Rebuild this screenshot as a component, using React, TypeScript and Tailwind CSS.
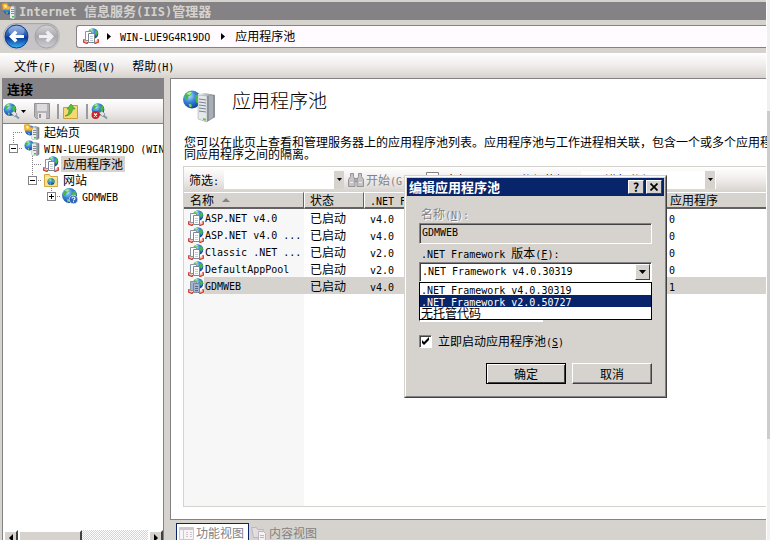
import { ReactNode } from "react";
import clsx from "clsx";

type Pool = {
  name: string;
  state: string;
  version: string;
  apps: number;
  selected?: boolean;
};

const pools: Pool[] = [
  { name: "ASP.NET v4.0", state: "已启动", version: "v4.0", apps: 0 },
  { name: "ASP.NET v4.0 ...", state: "已启动", version: "v4.0", apps: 0 },
  { name: "Classic .NET ...", state: "已启动", version: "v2.0", apps: 0 },
  { name: "DefaultAppPool", state: "已启动", version: "v2.0", apps: 0 },
  { name: "GDMWEB", state: "已启动", version: "v4.0", apps: 1, selected: true },
];

const frameworks = [".NET Framework v4.0.30319", ".NET Framework v2.0.50727", "无托管代码"];

export default function App() {
  return (
    <div className="relative flex h-screen cursor-default overflow-hidden bg-white font-['Noto_Sans_CJK_SC',sans-serif] text-[12px] leading-[16px] text-black">
      <IconDefs />
      <div className="flex min-w-0 flex-1 flex-col border-t-2 border-[#d6d3ce] bg-[#d6d3ce]">
        <TitleBar />
        <AddressBar />
        <nav className="flex h-[25px] shrink-0 items-center gap-[17px] bg-linear-to-b from-white via-[#f0ecec] to-[#d6d3ce] pl-[14px]">
          {["文件(F)", "视图(V)", "帮助(H)"].map((label) => (
            <button key={label} type="button">
              <Mixed text={label} />
            </button>
          ))}
        </nav>
        <div className="flex min-h-0 flex-1">
          <Connections />
          <PoolsView />
        </div>
      </div>
      <div className="ml-px w-[3px] shrink-0 bg-[#f0f0f0] pt-[111px]">
        <div className="h-[328px] bg-[#cdcdcd]" />
      </div>
      <EditDialog />
    </div>
  );
}

// Latin runs are set in a fixed-width face, half as wide as the Chinese characters.
function Mixed({ text, latin = "text-[10px]" }: { text: string; latin?: string }) {
  return (
    <span className="whitespace-pre">
      {text.split(/([\x20-\x7e]+)/).map((run, i) =>
        i % 2 ? (
          <span key={i} className={clsx("font-['DejaVu_Sans_Mono',monospace] leading-none", latin)}>
            {run}
          </span>
        ) : (
          run
        ),
      )}
    </span>
  );
}

// A label ending in an underlined access key, e.g. 名称(N):
function KeyLabel({ text, accessKey, tail = "" }: { text: string; accessKey: string; tail?: string }) {
  return (
    <span className="whitespace-pre">
      <Mixed text={text + "("} />
      <span className="font-['DejaVu_Sans_Mono',monospace] text-[10px] leading-none underline">{accessKey}</span>
      <Mixed text={")" + tail} />
    </span>
  );
}

function TitleBar() {
  return (
    <header className="flex h-[18px] shrink-0 items-center bg-[#848284] pl-[2px] text-[13px] font-bold text-[#d6d3ce]">
      <StartIcon />
      <h1 className="ml-px">
        <Mixed text="Internet 信息服务(IIS)管理器" latin="text-[12px]" />
      </h1>
    </header>
  );
}

function AddressBar() {
  return (
    <div className="flex h-[33px] shrink-0 items-center">
      <NavButtons />
      <div className="mb-px flex h-[23px] flex-1 items-center rounded-l-[3px] border-y border-l border-[#848284] bg-[#fffbff] pl-[6px]">
        <PoolIcon />
        <Chevron className="ml-[8px]" />
        <span className="ml-[9px]">
          <Mixed text="WIN-LUE9G4R19DO" />
        </span>
        <Chevron className="ml-[11px]" />
        <span className="ml-[10px]">应用程序池</span>
      </div>
    </div>
  );
}

function Connections() {
  return (
    <aside className="flex w-[162px] shrink-0 flex-col border-x border-[#848284] bg-white ml-[2px]">
      <h2 className="h-[21px] shrink-0 bg-[#848284] pl-[4px] text-[13px] leading-[21px] font-bold">连接</h2>
      <div className="flex h-[25px] shrink-0 items-center border-b border-[#848284] bg-linear-to-b from-white via-[#f0ecec] to-[#d6d3ce]">
        <button type="button" title="连接" className="flex items-center">
          <ConnectIcon />
          <DownArrow className="ml-px" />
        </button>
        <button type="button" title="保存" className="ml-[8px]">
          <SaveIcon />
        </button>
        <span className="ml-[7px] h-[15px] w-[2px] bg-[#9c9a9c]" />
        <button type="button" title="向上" className="ml-[4px]">
          <UpIcon />
        </button>
        <span className="ml-[8px] h-[15px] w-[2px] bg-[#9c9a9c]" />
        <button type="button" title="断开" className="ml-[3px]">
          <ConnectIcon broken />
        </button>
      </div>
      <ul className="min-h-0 flex-1 overflow-hidden pl-px">
        <TreeRow cells={["start"]} icon={<StartIcon />} label="起始页" />
        <TreeRow cells={["minus"]} icon={<ServerIcon />} label="WIN-LUE9G4R19DO (WIN-LUE9G4R19DO\Administrator)" />
        <TreeRow cells={["blank", "tee"]} icon={<PoolIcon />} label="应用程序池" selected />
        <TreeRow cells={["blank", "minus"]} icon={<FolderIcon />} label="网站" />
        <TreeRow cells={["blank", "blank", "plus"]} icon={<SiteIcon />} label="GDMWEB" />
      </ul>
      <div className="flex h-[10px] shrink-0 overflow-hidden bg-[repeating-conic-gradient(#fff_0_25%,#d6d3ce_0_50%)] bg-[length:2px_2px]">
        <button type="button" aria-label="向左滚动" className="flex h-[16px] w-[15px] items-center justify-center border-2 border-white border-r-[#424142] bg-[#d6d3ce]">
          <svg width="4" height="8" viewBox="0 0 4 8">
            <path d="M4 0v8L0 4z" />
          </svg>
        </button>
        <div className="h-[16px] w-[64px] border-2 border-white border-r-[#424142] bg-[#d6d3ce]" />
        <button type="button" aria-label="向右滚动" className="ml-auto flex h-[16px] w-[15px] items-center justify-center border-2 border-white border-r-[#424142] bg-[#d6d3ce]">
          <svg width="4" height="8" viewBox="0 0 4 8">
            <path d="M0 0v8l4-4z" />
          </svg>
        </button>
      </div>
    </aside>
  );
}

type Cell = "blank" | "start" | "tee" | "minus" | "plus";

type TreeRowProps = {
  cells: Cell[];
  icon: ReactNode;
  label: string;
  selected?: boolean;
};

function TreeRow({ cells, icon, label, selected }: TreeRowProps) {
  return (
    <li className="flex h-[16px] items-center">
      {cells.map((cell, i) => (
        <TreeCell key={i} kind={cell} />
      ))}
      <span className="ml-px shrink-0">{icon}</span>
      <span className={clsx("ml-[2px] px-[2px]", selected && "bg-[#d6d3ce]")}>
        <Mixed text={label} />
      </span>
    </li>
  );
}

function TreeCell({ kind }: { kind: Cell }) {
  const box = kind === "minus" || kind === "plus";
  return (
    <svg width="19" height="16" viewBox="0 0 19 16" className="shrink-0" shapeRendering="crispEdges">
      {kind !== "blank" && (
        <g stroke="#848284" strokeDasharray="1 1" fill="none">
          <path d="M9 8.5h10" />
          {kind === "start" && <path d="M9.5 8v8" />}
          {kind === "tee" && <path d="M9.5 0v16" />}
          {box && <path d="M9.5 0v4" />}
        </g>
      )}
      {box && <path d="M5.5 4.5h8v8h-8z" fill="#fff" stroke="#848284" />}
      {box && <path d="M7 8.5h5" stroke="#000" />}
      {kind === "plus" && <path d="M9.5 6v5" stroke="#000" />}
    </svg>
  );
}

function PoolsView() {
  return (
    <main className="ml-[6px] flex min-w-0 flex-1 flex-col">
      <section className="flex min-h-0 flex-1 flex-col border-y border-l border-[#848284] bg-white pb-[12px] pl-[12px]">
        <div className="flex h-[57px] shrink-0 gap-[17px] pt-[11px]">
          <BigServerIcon />
          <h2 className="text-[19px] leading-[20px] font-light">应用程序池</h2>
        </div>
        <p className="shrink-0 pl-px leading-[12px] whitespace-nowrap">
          您可以在此页上查看和管理服务器上的应用程序池列表。应用程序池与工作进程相关联，包含一个或多个应用程序，并提供不
          <br />
          同应用程序之间的隔离。
        </p>
        <div className="mt-[6px] flex min-h-0 flex-1 flex-col border-t border-b border-l border-[#d6d3ce]">
          <FilterBar />
          <div className="min-h-0 flex-1 bg-linear-to-r from-[#f7f7f7] from-[120px] to-white to-[120px]">
            <PoolTable />
          </div>
        </div>
      </section>
      <div className="flex h-[20px] shrink-0 items-start overflow-hidden pt-[3px] pl-[6px] text-[#848284]">
        <button type="button" className="flex h-[20px] items-center border border-[#08246b] bg-white pr-[4px] pl-[2px]">
          <FeatureIcon />
          <span className="ml-[2px]">功能视图</span>
        </button>
        <button type="button" className="flex h-[20px] items-center pl-[2px]">
          <ContentIcon />
          <span className="ml-[2px]">内容视图</span>
        </button>
      </div>
    </main>
  );
}

function FilterBar() {
  return (
    <div className="flex h-[25px] shrink-0 items-center bg-linear-to-b from-white via-[#f0ecec] to-[#d6d3ce] pl-[5px]">
      <label htmlFor="filter" className="w-[35px]">
        <Mixed text="筛选:" />
      </label>
      <input id="filter" className="h-[19px] w-[110px] bg-white px-1 outline-none" />
      <button type="button" aria-label="筛选历史" className="flex h-[18px] w-[10px] items-center justify-center bg-[#d6d3ce]">
        <DownArrow />
      </button>
      <button type="button" className="ml-[4px] flex w-[76px] items-center text-[#848284]">
        <BinocularsIcon />
        <span className="ml-[2px]">
          <Mixed text="开始(G)" />
        </span>
      </button>
      <button type="button" className="ml-[2px] flex w-[90px] items-center">
        <svg width="13" height="16" viewBox="0 0 13 16">
          <path d="M.5.5h12v15H.5z" fill="#fff" stroke="#848284" />
        </svg>
        <span className="ml-[6px]">
          <Mixed text="全部显示(A)" />
        </span>
      </button>
      <label htmlFor="grouping" className="ml-[4px] w-[61px]">
        <Mixed text="分组依据:" />
      </label>
      <div className="flex h-[18px]">
        <select id="grouping" className="w-[124px] appearance-none bg-white pl-[12px] outline-none">
          <option>不进行分组</option>
        </select>
        <span className="flex w-[11px] items-center justify-center border-r border-white bg-[#d6d3ce]">
          <DownArrow />
        </span>
      </div>
    </div>
  );
}

function PoolTable() {
  const th = "h-[17px] border-t border-b-2 border-t-white border-b-[#636163] p-0 text-left font-normal";
  return (
    <table className="w-full table-fixed border-separate border-spacing-0 whitespace-nowrap">
      <thead>
        <tr className="bg-[#d6d3ce] leading-[14px]">
          <th className={clsx(th, "w-[120px] border-r border-r-[#636163] pl-[6px]")}>
            <span className="flex items-center gap-[8px]">
              名称
              <svg width="8" height="4" viewBox="0 0 8 4" fill="#848284">
                <path d="M4 0l4 4H0z" />
              </svg>
            </span>
          </th>
          <th className={clsx(th, "w-[60px] border-r border-l border-r-[#636163] border-l-white pl-[5px]")}>状态</th>
          <th className={clsx(th, "w-[303px] border-l border-l-white pl-[5px]")}>
            <Mixed text=".NET Framework 版本" />
          </th>
          <th className={clsx(th, "pl-[3px]")}>应用程序</th>
        </tr>
      </thead>
      <tbody>
        {pools.map((pool, i) => (
          <tr key={i} className="h-[17px]">
            <td className="p-0">
              <div className="flex h-[17px] items-center pl-[4px]">
                <PoolIcon dim={pool.selected} />
                <span className={clsx("h-[17px] flex-1 pl-px", pool.selected && "bg-[#d6d3ce]")}>
                  <Mixed text={pool.name} />
                </span>
              </div>
            </td>
            <td className={clsx("p-0 pl-[6px]", pool.selected && "bg-[#d6d3ce]")}>{pool.state}</td>
            <td className={clsx("p-0 pl-[6px]", pool.selected && "bg-[#d6d3ce]")}>
              <Mixed text={pool.version} />
            </td>
            <td className={clsx("p-0 pl-[2px]", pool.selected && "bg-[#d6d3ce]")}>
              <Mixed text={String(pool.apps)} />
            </td>
          </tr>
        ))}
      </tbody>
    </table>
  );
}

function EditDialog() {
  const caption =
    "flex h-[14px] w-[16px] items-center justify-center border border-white border-r-[#424142] border-b-[#424142] bg-[#d6d3ce] text-black";
  const sunken = "border border-[#848284] border-r-white border-b-white";
  return (
    <div
      role="dialog"
      aria-labelledby="dialog-title"
      className="absolute top-[175px] left-[404px] flex h-[223px] w-[263px] flex-col border border-[#d6d3ce] border-r-[#424142] border-b-[#424142] bg-[#d6d3ce]"
    >
      <div className="flex flex-1 flex-col border border-white border-r-[#848284] border-b-[#848284] p-px">
        <div className="flex h-[18px] items-center bg-[#08246b] px-[2px] text-white">
          <h2 id="dialog-title" className="flex-1 text-[13px] font-bold">
            编辑应用程序池
          </h2>
          <button type="button" aria-label="帮助" className={clsx(caption, "text-[12px] font-bold")}>
            ?
          </button>
          <button type="button" aria-label="关闭" className={clsx(caption, "ml-[2px]")}>
            <svg width="8" height="8" viewBox="0 0 8 8" stroke="#000" strokeWidth="1.7">
              <path d="M.5.5l7 7M7.5.5l-7 7" />
            </svg>
          </button>
        </div>
        <form className="flex flex-1 flex-col px-[12px] pt-[10px]">
          <label htmlFor="pool-name" className="pl-[2px] text-[#848284] [text-shadow:1px_1px_#fff]">
            <KeyLabel text="名称" accessKey="N" tail=":" />
          </label>
          <input
            id="pool-name"
            disabled
            defaultValue="GDMWEB"
            className={clsx(
              "mt-px h-[21px] w-full px-[2px] pb-[2px] font-['DejaVu_Sans_Mono',monospace] text-[10px] shadow-[inset_1px_1px_#424142]",
              sunken,
            )}
          />
          <label htmlFor="framework" className="mt-px pl-[2px]">
            <KeyLabel text=".NET Framework 版本" accessKey="F" tail=":" />
          </label>
          <div className="relative mt-px">
            <div className={clsx("flex h-[20px] bg-white shadow-[inset_1px_1px_#424142]", sunken)}>
              <select
                id="framework"
                className="min-w-0 flex-1 appearance-none bg-transparent px-[2px] font-['DejaVu_Sans_Mono',monospace] text-[10px] outline-none"
              >
                {frameworks.map((framework) => (
                  <option key={framework}>{framework}</option>
                ))}
              </select>
              <span className="m-px flex w-[15px] items-center justify-center border border-white border-r-[#424142] border-b-[#424142] bg-[#d6d3ce]">
                <svg width="7" height="4" viewBox="0 0 7 4">
                  <path d="M0 0h7L3.5 4z" />
                </svg>
              </span>
            </div>
            <ul role="listbox" aria-label="版本" className="absolute top-[20px] left-0 h-[38px] w-full border border-black bg-white leading-[12px]">
              {frameworks.map((framework, i) => (
                <li
                  key={framework}
                  role="option"
                  aria-selected={i === 1}
                  className={clsx("h-[12px] pl-px", i === 1 && "bg-[#08246b] text-white")}
                >
                  <Mixed text={framework} />
                </li>
              ))}
            </ul>
          </div>
          <select aria-label="托管管道模式" className={clsx("mt-[20px] h-[20px] w-[124px] appearance-none bg-white", sunken)}>
            <option>集成</option>
          </select>
          <label className="mt-[11px] flex items-center gap-[6px]">
            <span className="relative size-[13px]">
              <input
                type="checkbox"
                defaultChecked
                className={clsx("peer block size-[13px] appearance-none bg-white shadow-[inset_1px_1px_#424142]", sunken)}
              />
              <svg width="13" height="13" viewBox="0 0 13 13" className="pointer-events-none absolute inset-0 hidden peer-checked:block">
                <path d="M3 5v3l2 2 5-5V2L5 7z" />
              </svg>
            </span>
            <KeyLabel text="立即启动应用程序池" accessKey="S" />
          </label>
          <div className="mt-[14px] flex justify-end gap-[6px]">
            <button type="button" className="h-[21px] w-[80px] border border-black shadow-[inset_1px_1px_#fff,inset_-1px_-1px_#424142]">
              确定
            </button>
            <button type="button" className="h-[21px] w-[80px] border border-white border-r-[#424142] border-b-[#424142] shadow-[inset_-1px_-1px_#848284]">
              取消
            </button>
          </div>
        </form>
      </div>
    </div>
  );
}

function IconDefs() {
  return (
    <svg className="absolute size-0" aria-hidden="true">
      <defs>
        <radialGradient id="globe" cx=".35" cy=".3" r=".75">
          <stop offset="0" stopColor="#b5e3ff" />
          <stop offset=".45" stopColor="#3a86d8" />
          <stop offset="1" stopColor="#0c3c9c" />
        </radialGradient>
        <linearGradient id="metal" x1="0" x2="1" y1="0" y2="0">
          <stop offset="0" stopColor="#f4f6f8" />
          <stop offset=".5" stopColor="#b9bec4" />
          <stop offset="1" stopColor="#747b83" />
        </linearGradient>
        <linearGradient id="back" x1="0" x2="0" y1="0" y2="1">
          <stop offset="0" stopColor="#7fa4dc" />
          <stop offset=".45" stopColor="#1f55b4" />
          <stop offset=".55" stopColor="#0a3796" />
          <stop offset="1" stopColor="#39b4f5" />
        </linearGradient>
        <linearGradient id="forward" x1="0" x2="0" y1="0" y2="1">
          <stop offset="0" stopColor="#d4d3d6" />
          <stop offset=".5" stopColor="#a9a8ac" />
          <stop offset="1" stopColor="#cfced2" />
        </linearGradient>
      </defs>
    </svg>
  );
}

function Globe({ x, y, r }: { x: number; y: number; r: number }) {
  return (
    <g transform={`translate(${x} ${y}) scale(${r / 8})`}>
      <circle r="8" fill="url(#globe)" />
      <path d="M-6.500-3C-6-6-2-8 0-7l-1 3-2 1-1 3-2 0zM3-4l3-1 1.500 4L6 3 4 3 3 0z" fill="#46b84a" />
      <path d="M-3 4l2 0 1 2-2 1z" fill="#7fd06a" />
      <path d="M-5-5c2-2 3-2 5-1.500L-2-4z" fill="#b4ef9c" />
    </g>
  );
}

function NavButtons() {
  return (
    <div className="ml-[3px] flex w-[73px] items-center">
      <div className="flex gap-[5px] rounded-full bg-[#c6c4c6] p-px shadow-[inset_0_1px_1px_#a5a3a5]">
        <button type="button" aria-label="后退">
          <svg width="25" height="25" viewBox="0 0 25 25">
            <circle cx="12.5" cy="12.5" r="11.5" fill="url(#back)" stroke="#123f8c" />
            <ellipse cx="12.5" cy="7" rx="8" ry="5" fill="#fff" opacity=".25" />
            <path d="M5 12.5l6-6 2.500 2.300-2 2.200H20v3h-8.500l2 2.200L11 18.500z" fill="#fff" />
          </svg>
        </button>
        <button type="button" aria-label="前进" disabled>
          <svg width="25" height="25" viewBox="0 0 25 25">
            <circle cx="12.5" cy="12.5" r="11.5" fill="url(#forward)" stroke="#a5a3a8" />
            <path d="M20 12.500l-6-6-2.500 2.300 2 2.200H5v3h8.500l-2 2.200 2.500 2.300z" fill="#efeef2" />
          </svg>
        </button>
      </div>
    </div>
  );
}

function Chevron({ className }: { className?: string }) {
  return (
    <svg width="4" height="7" viewBox="0 0 4 7" className={className}>
      <path d="M0 0l4 3.500L0 7z" />
    </svg>
  );
}

function DownArrow({ className }: { className?: string }) {
  return (
    <svg width="5" height="3" viewBox="0 0 5 3" className={className}>
      <path d="M0 0h5L2.500 3z" />
    </svg>
  );
}

function Tower() {
  return (
    <g>
      <path d="M8 3.500l3-1 4 1v11l-3 1.500-4-1z" fill="url(#metal)" stroke="#7b838b" strokeWidth=".6" />
      <path d="M8 4l4 .5V16l-4-1z" fill="#e9ecef" />
      <path d="M9 6.500h3M9 8.500h3M9 10.500h3" stroke="#6d747c" strokeWidth=".8" />
      <path d="M10 13h2v1.500h-2z" fill="#39c639" />
    </g>
  );
}

function StartIcon() {
  return (
    <svg width="16" height="16" viewBox="0 0 16 16">
      <Globe x={6} y={6.5} r={5} />
      <Tower />
      <path d="M0 1l5-1 1 3 3 1-2 3-3-1-3 1z" fill="#f7b731" stroke="#d88a10" strokeWidth=".5" />
      <path d="M2 2l2 0 1 2-2 1z" fill="#fff3b0" />
    </svg>
  );
}

function ServerIcon() {
  return (
    <svg width="16" height="16" viewBox="0 0 16 16">
      <Globe x={5.5} y={5.5} r={5} />
      <Tower />
    </svg>
  );
}

function BigServerIcon() {
  return (
    <svg width="32" height="33" viewBox="0 0 32 33" className="shrink-0">
      <Globe x={9} y={9.5} r={9} />
      <path d="M15 4l7-1 10 2v22l-9 5-8-3z" fill="url(#metal)" />
      <path d="M15 5l9 1v26l-9-3z" fill="#e4e8eb" stroke="#9ca3aa" strokeWidth=".5" />
      <path d="M24 6l8-1v22l-8 5z" fill="#8b9299" />
      <path d="M26 6l4-.5v22L26 30z" fill="#a9afb5" />
      <path d="M16 9l7 1M16 12l7 1M16 15l7 1M16 18l7 1M16 21l7 1" stroke="#7b838b" />
      <path d="M20 28l3 .7v2l-3-.8z" fill="#5ad51e" />
    </svg>
  );
}

function PoolIcon({ dim }: { dim?: boolean }) {
  return (
    <svg width="16" height="16" viewBox="0 0 16 16" className="shrink-0">
      <Globe x={10} y={5.5} r={5.3} />
      <path d="M1 11l-.5 3L4 15.500l1-1.500M15 11l.5 3-3.500 1.500-1-1.500" fill="#f2c4bc" stroke="#d03a28" strokeWidth="1.300" />
      <path d="M2.500 3.500h6v9h-6z" fill={dim ? "#a5b1cd" : "#fff"} stroke="#8a93a0" />
      <path d="M5.500 5.500h6v9h-6z" fill={dim ? "#a5b1cd" : "#fff"} stroke="#7d8794" />
      <path d="M7 8.500h3M7 10.500h3M7 12.500h3" stroke={dim ? "#5a6a92" : "#c3c9d0"} />
    </svg>
  );
}

function FolderIcon() {
  return (
    <svg width="16" height="16" viewBox="0 0 16 16">
      <path d="M1.500 2.500h5l1 2h7v10h-13z" fill="#f9e08a" stroke="#d3a73c" />
      <path d="M2 6h12" stroke="#fff4c0" />
      <Globe x={8} y={9.5} r={3.6} />
    </svg>
  );
}

function SiteIcon() {
  return (
    <svg width="16" height="16" viewBox="0 0 16 16">
      <Globe x={7.5} y={7.5} r={7.5} />
      <circle cx="11.5" cy="11.5" r="4.3" fill="#3164b8" stroke="#dbe6f7" strokeWidth=".8" />
      <path d="M10 10.500c0-2 3-2 3 0 0 1-1.500 1-1.500 2M11.500 13.200v1" fill="none" stroke="#fff" strokeWidth="1.1" />
    </svg>
  );
}

function ConnectIcon({ broken }: { broken?: boolean }) {
  return (
    <svg width="17" height="17" viewBox="0 0 17 17">
      <Globe x={7} y={6.5} r={6.3} />
      <path d="M8 10l3-2 3 3-2 3z" fill="#dfe3e6" stroke="#7b838b" strokeWidth=".7" />
      <path d="M12.500 12.500l3.500 3" stroke="#7b9aa8" strokeWidth="2" />
      {broken && (
        <g>
          <circle cx="4.5" cy="12" r="4" fill="#cf2323" />
          <path d="M3 10.500l3 3M6 10.500l-3 3" stroke="#fff" strokeWidth="1.2" />
        </g>
      )}
    </svg>
  );
}

function SaveIcon() {
  return (
    <svg width="16" height="16" viewBox="0 0 16 16">
      <path d="M.5.5h15v15h-13l-2-2z" fill="#b5b2b5" stroke="#949294" />
      <path d="M3 1h10v7H3z" fill="#dedbde" />
      <path d="M4 10h8v6H4z" fill="#e7e5e7" />
      <path d="M5 11h2v4H5z" fill="#949294" />
    </svg>
  );
}

function UpIcon() {
  return (
    <svg width="15" height="16" viewBox="0 0 15 16">
      <path d="M.5 4.500h6l1-2h7v13H.5z" fill="#f6d873" stroke="#caa03a" />
      <path d="M2 13c3-1 4-3 4-7H4l4-5 4 5h-2.500C9.500 9 7 13 2 13z" fill="#5bbf3a" stroke="#338f22" strokeWidth=".6" />
    </svg>
  );
}

function BinocularsIcon() {
  return (
    <svg width="16" height="16" viewBox="0 0 16 16" stroke="#949294" fill="#c6c3c6">
      <path d="M2.500 1.500h3v3l1.500 3v7H.5v-7l2-3zM10.500 1.500h3v3l2 3v7H9v-7l1.500-3z" />
      <path d="M7 6.500h2v3H7z" />
      <path d="M2 10.500h3M11 10.500h3" stroke="#efebef" />
    </svg>
  );
}

function FeatureIcon() {
  return (
    <svg width="15" height="15" viewBox="0 0 15 15" stroke="#cec7ce">
      <path d="M.5 1.500h14v12H.5z" fill="#f7f3f7" />
      <path d="M1 3h13" strokeWidth="2" />
      <path d="M4.500 4v9M7 6.500h2M11 6.500h2M7 8.500h2M11 8.500h2M7 10.500h2M11 10.500h2" />
    </svg>
  );
}

function ContentIcon() {
  return (
    <svg width="16" height="16" viewBox="0 0 16 16" stroke="#bdb6bd" fill="#e2dde0">
      <path d="M.5 2.500h5l1 2h6l-2 8h-8z" />
      <path d="M7.500 6.500h5l2 2v7h-7z" fill="#f4f0f3" />
      <path d="M9 10.500h4M9 12.500h4" />
    </svg>
  );
}
